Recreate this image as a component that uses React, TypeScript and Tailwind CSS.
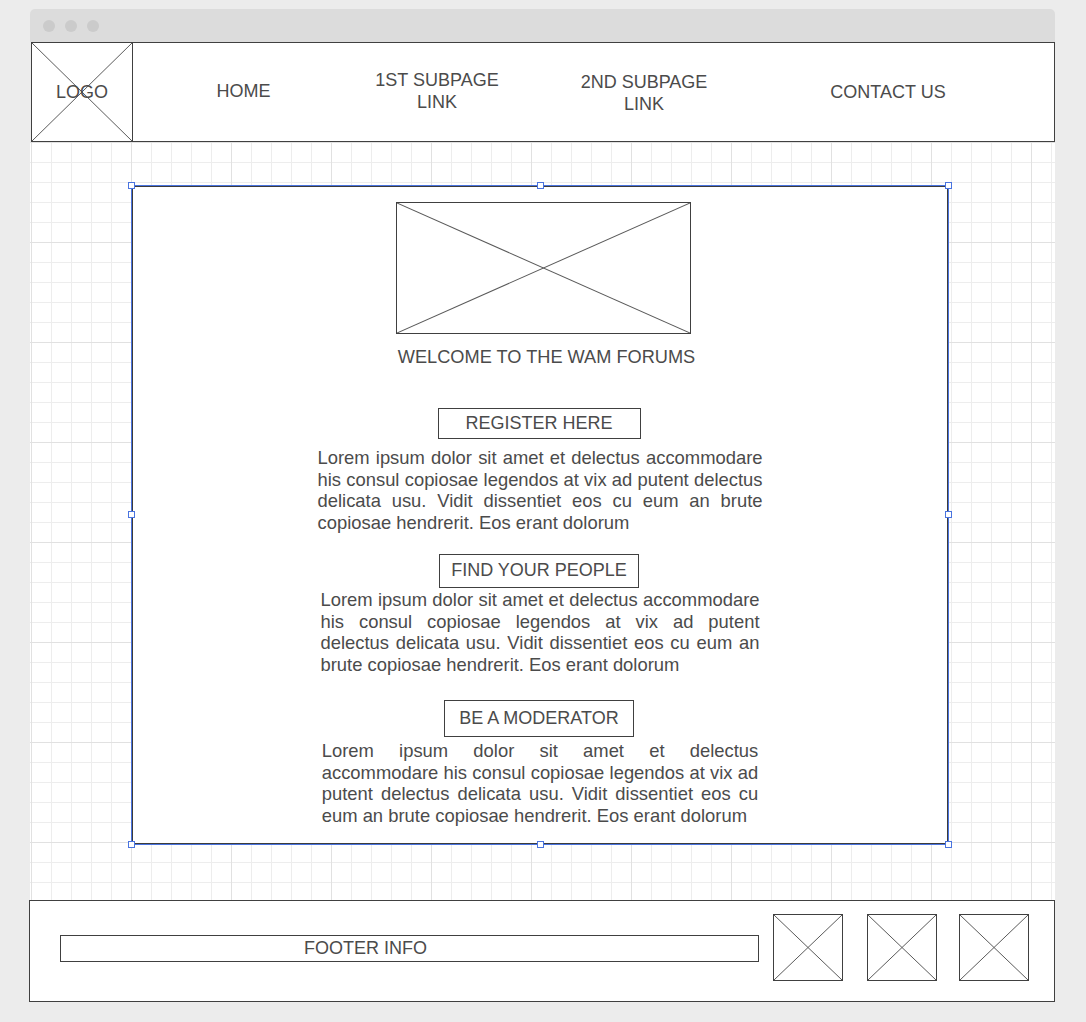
import type { ReactNode } from 'react'

const INK = 'text-[#4b4b4b]'

function CrossBox({ className = '', children }: { className?: string; children?: ReactNode }) {
  return (
    <div className={`relative border border-[#404040] bg-white ${className}`}>
      <svg className="absolute inset-0 h-full w-full" viewBox="0 0 100 100" preserveAspectRatio="none">
        <line x1="0" y1="0" x2="100" y2="100" stroke="#5a5a5a" strokeWidth="1" vectorEffect="non-scaling-stroke" />
        <line x1="100" y1="0" x2="0" y2="100" stroke="#5a5a5a" strokeWidth="1" vectorEffect="non-scaling-stroke" />
      </svg>
      {children}
    </div>
  )
}

function Handle({ className }: { className: string }) {
  return <span className={`absolute h-[7px] w-[7px] border border-[#4a74e0] bg-white ${className}`} />
}

const LOREM =
  'Lorem ipsum dolor sit amet et delectus accommodare his consul copiosae legendos at vix ad putent delectus delicata usu. Vidit dissentiet eos cu eum an brute copiosae hendrerit. Eos erant dolorum'

function Section({
  label,
  boxW,
  boxH,
  boxMt,
  textW,
  textMt,
}: {
  label: string
  boxW: string
  boxH: string
  boxMt: string
  textW: string
  textMt: string
}) {
  return (
    <>
      <div className={`mr-[2px] flex items-center justify-center border border-[#404040] pb-[2px] ${boxW} ${boxH} ${boxMt}`}>
        <span className="text-[18px] leading-none">{label}</span>
      </div>
      <p className={`text-justify text-[18.4px] leading-[21.5px] ${textW} ${textMt}`}>{LOREM}</p>
    </>
  )
}

export default function App() {
  return (
    <div className={`h-[1022px] w-full bg-[#ececec] pl-[30px] pt-[9px] font-['Liberation_Sans',Arial,sans-serif] ${INK}`}>
      <div className="w-[1025px]">
        {/* window chrome */}
        <div className="flex h-[33px] items-center gap-[10px] rounded-t-[5px] bg-[#dcdcdc] pl-[13px]">
          <span className="h-[12px] w-[12px] rounded-full bg-[#cbcbcb]" />
          <span className="h-[12px] w-[12px] rounded-full bg-[#cbcbcb]" />
          <span className="h-[12px] w-[12px] rounded-full bg-[#cbcbcb]" />
        </div>

        {/* header */}
        <header className="ml-px flex h-[100px] items-stretch border border-[#404040] bg-white">
          <CrossBox className="-my-px -ml-px w-[102px] shrink-0">
            <span className="absolute inset-0 flex items-center justify-center text-[18px]">LOGO</span>
          </CrossBox>
          <nav className="flex items-center pt-[2px] text-[18px] leading-[22px]">
            <a className="mb-[4px] w-[221px] text-center">HOME</a>
            <a className="mb-[4px] flex w-[166px] justify-center text-center">
              <span className="w-[140px]">1ST SUBPAGE LINK</span>
            </a>
            <a className="flex w-[248px] justify-center text-center">
              <span className="w-[140px]">2ND SUBPAGE LINK</span>
            </a>
            <a className="mb-[2px] w-[240px] text-center">CONTACT US</a>
          </nav>
        </header>

        {/* canvas with grid */}
        <main className="h-[758px] bg-white bg-[linear-gradient(to_right,#e1e1e1_1px,transparent_1px),linear-gradient(to_bottom,#e1e1e1_1px,transparent_1px),linear-gradient(to_right,#ededed_1px,transparent_1px),linear-gradient(to_bottom,#ededed_1px,transparent_1px)] bg-[size:100px_100px,100px_100px,20px_20px,20px_20px] bg-[position:1px_0] pl-[102px] pt-[44px]">
          <section className="relative flex h-[658px] w-[816px] flex-col items-center border border-[#3c3c3c] bg-white outline outline-1 outline-[#4a74e0]">
            <Handle className="-left-[5px] -top-[5px]" />
            <Handle className="left-[404px] -top-[5px]" />
            <Handle className="-right-[5px] -top-[5px]" />
            <Handle className="-left-[5px] top-[324px]" />
            <Handle className="-right-[5px] top-[324px]" />
            <Handle className="-bottom-[5px] -left-[5px]" />
            <Handle className="-bottom-[5px] left-[404px]" />
            <Handle className="-bottom-[5px] -right-[5px]" />

            <CrossBox className="ml-[7px] mt-[15px] h-[132px] w-[295px]" />
            <p className="ml-[13px] mt-[12px] text-[18.2px] leading-[22px]">WELCOME TO THE WAM FORUMS</p>

            <Section label="REGISTER HERE" boxW="w-[203px]" boxH="h-[31px]" boxMt="mt-[40px]" textW="w-[445px]" textMt="mt-[8px]" />
            <Section label="FIND YOUR PEOPLE" boxW="w-[200px]" boxH="h-[34px]" boxMt="mt-[21px]" textW="w-[439px]" textMt="mt-[1px]" />
            <Section label="BE A MODERATOR" boxW="w-[190px]" boxH="h-[37px]" boxMt="mt-[25px]" textW="w-[436.5px]" textMt="mt-[3px]" />
          </section>
        </main>

        {/* footer */}
        <footer className="-ml-px flex h-[102px] w-[1026px] items-start border border-[#404040] bg-white pl-[30px]">
          <div className="mt-[34px] flex h-[27px] w-[699px] items-center justify-center border border-[#404040] pr-[88px] text-[18px]">
            FOOTER INFO
          </div>
          <CrossBox className="ml-[14px] mt-[13px] h-[67px] w-[70px]" />
          <CrossBox className="ml-[24px] mt-[13px] h-[67px] w-[70px]" />
          <CrossBox className="ml-[22px] mt-[13px] h-[67px] w-[70px]" />
        </footer>
      </div>
    </div>
  )
}
